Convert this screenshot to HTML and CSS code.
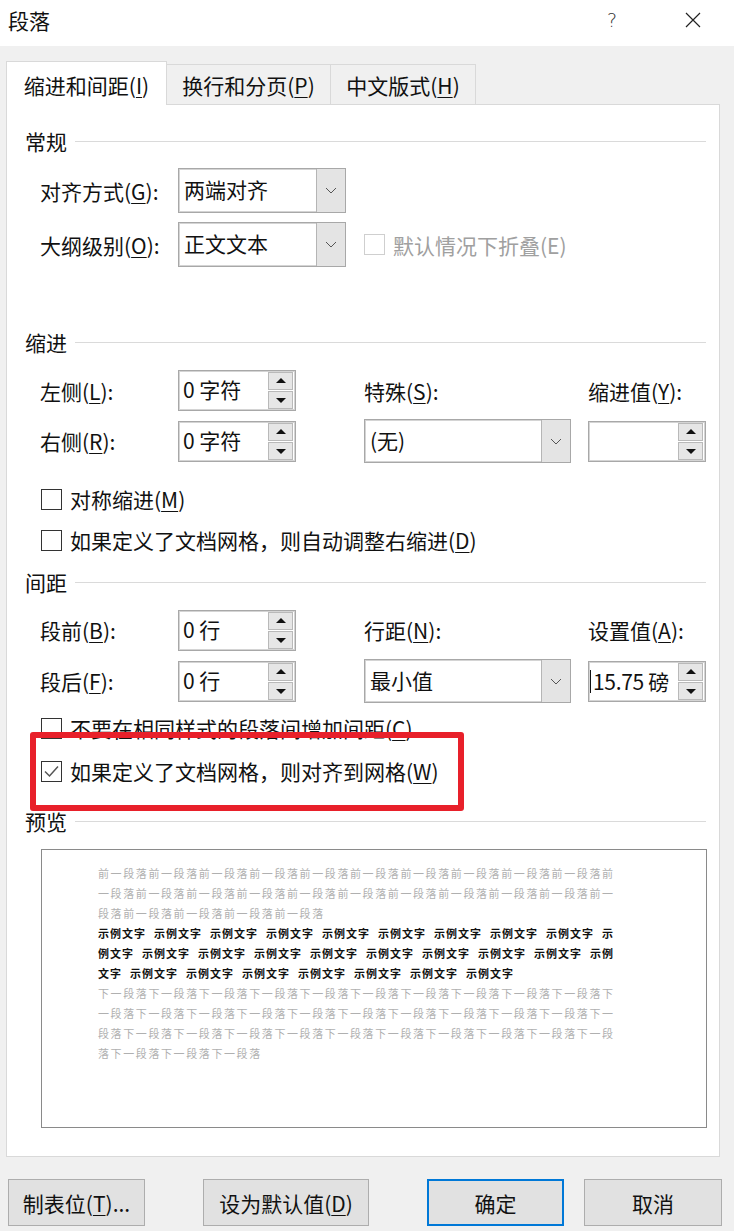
FILE: index.html
```html
<!DOCTYPE html>
<html lang="zh-CN">
<head>
  <meta charset="UTF-8">
  <title>段落</title>
  <link rel="stylesheet" href="styles.css">
</head>
<body>
  <div class="titlebar">
    <span class="title">段落</span>
    <span class="help">?</span>
    <svg class="close" width="16" height="16" viewBox="0 0 16 16"><path d="M1 1L15 15M15 1L1 15" stroke="#222" stroke-width="1.2" fill="none"/></svg>
  </div>

  <div class="tabs">
    <div class="tab active">缩进和间距(<u>I</u>)</div>
    <div class="tab tab-2">换行和分页(<u>P</u>)</div>
    <div class="tab tab-3">中文版式(<u>H</u>)</div>
  </div>

  <div class="panel">
    <!-- 常规 -->
    <div class="group-title">常规</div>
    <div class="field-row first">
      <span class="label">对齐方式(<u>G</u>):</span>
      <div class="select wide"><span class="select-value">两端对齐</span><span class="select-btn"><svg width="12" height="7" viewBox="0 0 12 7"><polyline points="1,1 6,6 11,1" fill="none" stroke="#555" stroke-width="1"/></svg></span></div>
    </div>
    <div class="field-row">
      <span class="label">大纲级别(<u>O</u>):</span>
      <div class="select wide"><span class="select-value">正文文本</span><span class="select-btn"><svg width="12" height="7" viewBox="0 0 12 7"><polyline points="1,1 6,6 11,1" fill="none" stroke="#555" stroke-width="1"/></svg></span></div>
      <label class="check disabled inline"><span class="box"></span><span>默认情况下折叠(E)</span></label>
    </div>

    <!-- 缩进 -->
    <div class="group-title indent-title">缩进</div>
    <div class="form-grid">
      <span class="label">左侧(<u>L</u>):</span>
      <div class="spinner"><span class="spin-value">0 字符</span><span class="spin-btns"><span class="spin up"></span><span class="spin down"></span></span></div>
      <span class="label col-4">特殊(<u>S</u>):</span>
      <span class="label col-6">缩进值(<u>Y</u>):</span>

      <span class="label">右侧(<u>R</u>):</span>
      <div class="spinner"><span class="spin-value">0 字符</span><span class="spin-btns"><span class="spin up"></span><span class="spin down"></span></span></div>
      <div class="select col-4"><span class="select-value">(无)</span><span class="select-btn"><svg width="12" height="7" viewBox="0 0 12 7"><polyline points="1,1 6,6 11,1" fill="none" stroke="#555" stroke-width="1"/></svg></span></div>
      <div class="spinner col-6"><span class="spin-value"></span><span class="spin-btns"><span class="spin up"></span><span class="spin down"></span></span></div>
    </div>
    <label class="check first-check"><span class="box"></span><span>对称缩进(<u>M</u>)</span></label>
    <label class="check next-check"><span class="box"></span><span>如果定义了文档网格，则自动调整右缩进(<u>D</u>)</span></label>

    <!-- 间距 -->
    <div class="group-title spacing-title">间距</div>
    <div class="form-grid spacing-grid">
      <span class="label">段前(<u>B</u>):</span>
      <div class="spinner"><span class="spin-value">0 行</span><span class="spin-btns"><span class="spin up"></span><span class="spin down"></span></span></div>
      <span class="label col-4">行距(<u>N</u>):</span>
      <span class="label col-6">设置值(<u>A</u>):</span>

      <span class="label">段后(<u>F</u>):</span>
      <div class="spinner"><span class="spin-value">0 行</span><span class="spin-btns"><span class="spin up"></span><span class="spin down"></span></span></div>
      <div class="select col-4"><span class="select-value">最小值</span><span class="select-btn"><svg width="12" height="7" viewBox="0 0 12 7"><polyline points="1,1 6,6 11,1" fill="none" stroke="#555" stroke-width="1"/></svg></span></div>
      <div class="spinner col-6"><span class="spin-value caret">15.75 磅</span><span class="spin-btns"><span class="spin up"></span><span class="spin down"></span></span></div>
    </div>
    <label class="check spacing-check"><span class="box"></span><span>不要在相同样式的段落间增加间距(<u>C</u>)</span></label>
    <label class="check grid-check"><span class="box checked"><svg width="19" height="19" viewBox="0 0 19 19"><polyline points="3,9.5 7.5,14 16,4.5" fill="none" stroke="#555" stroke-width="1.5"/></svg></span><span>如果定义了文档网格，则对齐到网格(<u>W</u>)</span></label>

    <!-- 预览 -->
    <div class="group-title preview-title">预览</div>
    <div class="preview">
      <div class="line prev">前一段落前一段落前一段落前一段落前一段落前一段落前一段落前一段落前一段落前一段落前</div>
      <div class="line prev">一段落前一段落前一段落前一段落前一段落前一段落前一段落前一段落前一段落前一段落前一</div>
      <div class="line prev">段落前一段落前一段落前一段落前一段落</div>
      <div class="line sample">示例文字 示例文字 示例文字 示例文字 示例文字 示例文字 示例文字 示例文字 示例文字 示</div>
      <div class="line sample">例文字 示例文字 示例文字 示例文字 示例文字 示例文字 示例文字 示例文字 示例文字 示例</div>
      <div class="line sample">文字 示例文字 示例文字 示例文字 示例文字 示例文字 示例文字 示例文字</div>
      <div class="line prev">下一段落下一段落下一段落下一段落下一段落下一段落下一段落下一段落下一段落下一段落下</div>
      <div class="line prev">一段落下一段落下一段落下一段落下一段落下一段落下一段落下一段落下一段落下一段落下一</div>
      <div class="line prev">段落下一段落下一段落下一段落下一段落下一段落下一段落下一段落下一段落下一段落下一段</div>
      <div class="line prev">落下一段落下一段落下一段落</div>
    </div>

    <div class="highlight"></div>
  </div>

  <div class="footer">
    <button class="btn">制表位(<u>T</u>)...</button>
    <button class="btn btn-default">设为默认值(<u>D</u>)</button>
    <button class="btn btn-ok">确定</button>
    <button class="btn btn-cancel">取消</button>
  </div>
</body>
</html>
```

FILE: styles.css
```css
body {
  margin: 0;
  width: 734px;
  height: 1231px;
  background: #f0f0f0;
  font-family: "Noto Sans CJK SC", "Liberation Sans", sans-serif;
  font-size: 21px;
  color: #111;
  overflow: hidden;
}
u {
  text-decoration-thickness: 1px;
  text-underline-offset: 3px;
}

/* title bar */
.titlebar {
  height: 46px;
  background: #fff;
  display: flex;
  align-items: center;
}
.title {
  margin-left: 8px;
  line-height: 40px;
  margin-top: -6px;
}
.help {
  margin-left: auto;
  width: 20px;
  text-align: center;
  font-family: "DejaVu Sans", sans-serif;
  font-size: 19px;
  font-weight: 300;
  color: #333;
  margin-top: -7px;
}
.close {
  margin-left: 63px;
  margin-right: 33px;
  margin-top: -7px;
}

/* tabs */
.tabs {
  display: flex;
  align-items: flex-end;
  height: 43px;
  padding-top: 15px;
  padding-left: 6px;
}
.tab {
  height: 40px;
  box-sizing: border-box;
  padding-top: 2px;
  line-height: 37px;
  text-align: center;
  border: 1px solid #d9d9d9;
  border-bottom: none;
  background: #f0f0f0;
  margin-left: -1px;
}
.tab.active {
  height: 44px;
  margin-bottom: -1px;
  margin-left: 0;
  padding-top: 5px;
  width: 161px;
  background: #fff;
  position: relative;
  z-index: 1;
}
.tab-2 { width: 165px; }
.tab-3 { width: 146px; }

/* panel */
.panel {
  position: relative;
  margin-left: 6px;
  width: 714px;
  height: 1053px;
  box-sizing: border-box;
  border: 1px solid #d9d9d9;
  background: #fff;
  padding: 22px 13px 0 18px;
}
.group-title {
  display: flex;
  align-items: center;
  height: 28px;
  line-height: 28px;
  gap: 8px;
}
.group-title::after {
  content: "";
  flex: 1;
  border-top: 1px solid #dadada;
  margin-top: 1px;
}
.indent-title { margin-top: 61px; }
.spacing-title { margin-top: 13px; }
.preview-title { margin-top: 21px; }

.field-row {
  display: flex;
  align-items: center;
  margin-left: 15px;
  margin-top: 9px;
}
.field-row.first { margin-top: 13px; }
.label {
  width: 138px;
  flex-shrink: 0;
  white-space: nowrap;
}

/* select */
.select {
  display: flex;
  height: 45px;
  box-sizing: border-box;
  border: 1px solid #a8a8a8;
  box-shadow: inset 0 0 0 1px #d4d4d4;
  background: #fff;
}
.select.wide { width: 168px; }
.select-value {
  flex: 1;
  padding-left: 5px;
  line-height: 41px;
  white-space: nowrap;
}
.select-btn {
  width: 28px;
  background: #e4e4e4;
  border-left: 1px solid #b5b5b5;
  display: flex;
  align-items: center;
  justify-content: center;
}

/* spinner */
.spinner {
  display: flex;
  width: 118px;
  height: 41px;
  box-sizing: border-box;
  border: 1px solid #a8a8a8;
  box-shadow: inset 0 0 0 1px #d4d4d4;
  background: #fff;
}
.spin-value {
  flex: 1;
  padding-left: 4px;
  line-height: 36px;
  white-space: nowrap;
}
.spin-value.caret {
  padding-left: 2px;
  border-left: 1px solid #111;
  margin: 8px 0 8px 1px;
  line-height: 22px;
  letter-spacing: -0.3px;
}
.spin-btns {
  width: 25px;
  display: flex;
  flex-direction: column;
  gap: 1px;
  padding: 1px 2px 1px 0;
}
.spin {
  flex: 1;
  background: #e6e6e6;
  border: 1px solid #b9b9b9;
  position: relative;
}
.spin::after {
  content: "";
  position: absolute;
  left: 50%;
  top: 50%;
  margin-left: -5px;
  border-left: 5px solid transparent;
  border-right: 5px solid transparent;
}
.spin.up::after {
  margin-top: -3px;
  border-bottom: 5px solid #111;
}
.spin.down::after {
  margin-top: -2px;
  border-top: 5px solid #111;
}

/* grids */
.form-grid {
  display: grid;
  grid-template-columns: 138px 118px 68px 207px 17px 118px;
  grid-template-rows: 41px 44px;
  row-gap: 8px;
  align-items: center;
  margin-left: 15px;
  margin-top: 14px;
}
.spacing-grid {
  grid-template-rows: 42px 44px;
  margin-top: 13px;
}
.col-4 { grid-column: 4; }
.col-6 { grid-column: 6; }
.form-grid .select { height: 44px; }
.form-grid .select-value { line-height: 40px; }

/* checkboxes */
.check {
  display: flex;
  align-items: center;
  gap: 8px;
  height: 30px;
  margin-left: 16px;
  white-space: nowrap;
}
.check.inline {
  margin-left: 18px;
}
.box {
  width: 21px;
  height: 21px;
  box-sizing: border-box;
  border: 1px solid #333;
  background: #fff;
  display: flex;
  align-items: center;
  justify-content: center;
  flex-shrink: 0;
}
.check.disabled {
  color: #a0a0a0;
}
.check.disabled .box {
  border-color: #cfcfcf;
}
.first-check { margin-top: 21px; }
.next-check { margin-top: 11px; }
.spacing-check { margin-top: 10px; }
.grid-check { margin-top: 13px; }

/* preview */
.preview {
  margin: 14px 0 0 16px;
  width: 666px;
  height: 279px;
  box-sizing: border-box;
  border: 1px solid #8a8a8a;
  background: #fff;
  padding: 13px 0 0 56px;
}
.line {
  font-size: 11px;
  line-height: 20px;
  height: 20px;
  white-space: pre;
}
.line.prev {
  color: #b0b0b0;
  letter-spacing: 1.6px;
}
.line.sample {
  color: #111;
  font-weight: 700;
  letter-spacing: 1px;
  word-spacing: 4.5px;
}

/* annotation */
.highlight {
  position: absolute;
  left: 23px;
  top: 627px;
  width: 434px;
  height: 79px;
  box-sizing: border-box;
  border: 6px solid #e8202a;
  border-radius: 3px;
}

/* footer */
.footer {
  display: flex;
  padding: 22px 0 0 8px;
}
.btn {
  height: 47px;
  box-sizing: border-box;
  border: 1px solid #adadad;
  background: #e1e1e1;
  font-family: "Noto Sans CJK SC", "Liberation Sans", sans-serif;
  font-size: 21px;
  color: #111;
  padding: 0;
  width: 137px;
}
.btn-default {
  width: 166px;
  margin-left: 58px;
}
.btn-ok {
  margin-left: 58px;
  border: 2px solid #0078d7;
}
.btn-cancel {
  width: 138px;
  margin-left: 20px;
}
```
